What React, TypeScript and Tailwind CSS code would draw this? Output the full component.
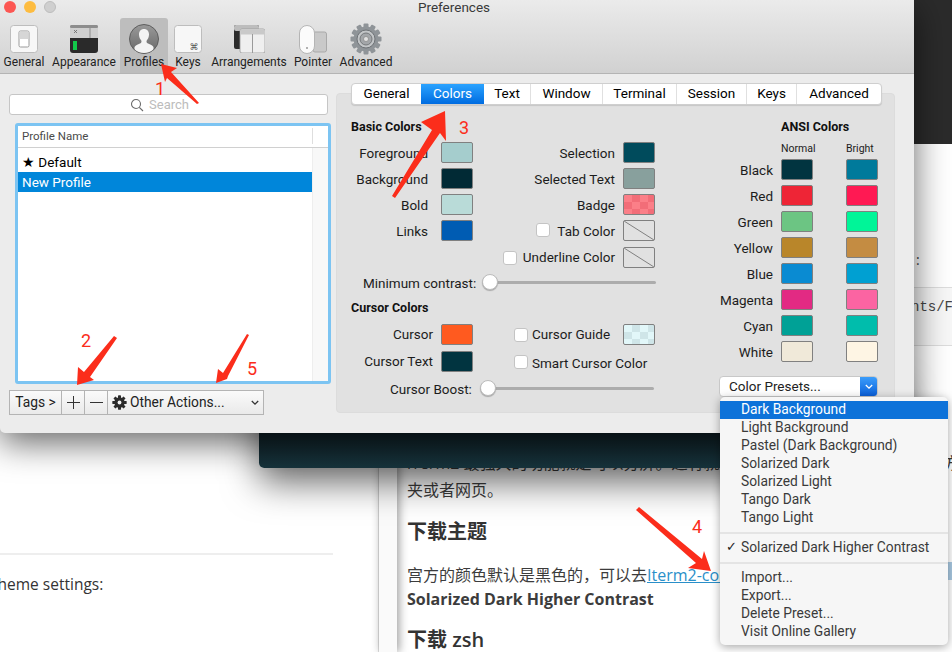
import React from "react";

const UI = { fontFamily: "Roboto, 'Liberation Sans', sans-serif" };
const PAGE = { fontFamily: "'Open Sans', 'Noto Sans CJK SC', sans-serif" };

function Swatch({ color, kind }: { color?: string; kind?: "none" | "check" | "checkLight" }) {
  const bg =
    kind === "check"
      ? "bg-[conic-gradient(#f26d78_25%,#fb7f88_0_50%,#f26d78_0_75%,#fb7f88_0)] bg-[length:16px_14px]"
      : kind === "checkLight"
      ? "bg-[conic-gradient(#cfe5e8_25%,#e2f7f9_0_50%,#cfe5e8_0_75%,#e2f7f9_0)] bg-[length:16px_14px]"
      : "";
  return (
    <div
      className={`relative w-8 h-[21px] shrink-0 rounded-[2px] border border-[#808080] overflow-hidden ${bg}`}
      style={color ? { backgroundColor: color } : undefined}
    >
      {kind === "none" && (
        <svg className="absolute inset-0 w-full h-full" viewBox="0 0 30 19" preserveAspectRatio="none">
          <line x1="0" y1="0" x2="30" y2="19" stroke="#808080" strokeWidth="1" />
        </svg>
      )}
    </div>
  );
}

function Check() {
  return <div className="w-[14px] h-[14px] shrink-0 rounded-[3px] bg-white border border-[#c4c4c4]" />;
}

function Label({ children }: { children: React.ReactNode }) {
  return <span className="pt-[2px] leading-[16px] whitespace-nowrap">{children}</span>;
}

function Slider() {
  return (
    <div className="relative h-4 w-[174px] flex items-center">
      <div className="w-full h-[3px] rounded-full bg-[#acacac]" />
      <div className="absolute left-0 top-0 w-4 h-4 rounded-full bg-white border border-[#bcbcbc] shadow-[0_1px_1px_rgba(0,0,0,.25)]" />
    </div>
  );
}

const tabs: [string, string][] = [
  ["General", "w-[69px]"],
  ["Colors", "w-[63px]"],
  ["Text", "w-[47px]"],
  ["Window", "w-[72px]"],
  ["Terminal", "w-[74px]"],
  ["Session", "w-[70px]"],
  ["Keys", "w-[50px]"],
  ["Advanced", "w-[84px]"],
];

const ansi: [string, string, string][] = [
  ["Black", "#013440", "#007a9b"],
  ["Red", "#ee2536", "#ff1953"],
  ["Green", "#6cc583", "#00f598"],
  ["Yellow", "#b9862a", "#c48c42"],
  ["Blue", "#0a8bd2", "#00a0d2"],
  ["Magenta", "#e22a83", "#fb64a2"],
  ["Cyan", "#00a196", "#00bdac"],
  ["White", "#f0e9d9", "#fef5e4"],
];

function ToolItem({ label, children, active, w }: { label: string; children: React.ReactNode; active?: boolean; w: string }) {
  return (
    <div className={`flex flex-col items-center h-[55px] rounded-t-[3px] ${w} ${active ? "bg-[#bdbdbd]" : ""}`}>
      <div className="h-[36px] flex items-center justify-center mt-[3px]">{children}</div>
      <span className="text-[12px] leading-[14px] text-[#222] whitespace-nowrap mt-[-2px]">{label}</span>
    </div>
  );
}

function Toolbar() {
  return (
    <div className="relative h-[74px] bg-gradient-to-b from-[#ebebeb] to-[#d1d1d1] border-b border-[#b4b4b4] shrink-0">
      <div className="flex items-center gap-[8px] pl-[4px] h-[14px]">
        <div className="w-3 h-3 rounded-full bg-[#fc5753]" />
        <div className="w-3 h-3 rounded-full bg-[#fdbc40]" />
        <div className="w-3 h-3 rounded-full bg-[#cfcfcf] border border-[#bdbdbd]" />
      </div>
      <div className="absolute top-0 left-0 right-0 pr-[6px] text-center text-[13.500px] leading-[14px] text-[#3a3a3a]">Preferences</div>
      <div className="flex pt-[4px]">
        <ToolItem label="General" w="w-[48px]">
          <svg width="28" height="28" viewBox="0 0 28 28">
            <rect x=".5" y=".5" width="27" height="27" rx="3" fill="#f7f7f7" stroke="#bdbdbd" />
            <rect x="9" y="6" width="10" height="16" rx="1.5" fill="#fff" stroke="#9a9a9a" />
            <rect x="9.5" y="6.5" width="9" height="7.5" fill="#d6d6d6" />
          </svg>
        </ToolItem>
        <ToolItem label="Appearance" w="w-[72px]">
          <svg width="28" height="28" viewBox="0 0 28 28">
            <rect width="28" height="28" rx="3" fill="#2a2a2a" />
            <path d="M0 3a3 3 0 0 1 3-3h22a3 3 0 0 1 3 3v10H0z" fill="#cfcfcf" />
            <rect x="0" y="0" width="28" height="3" rx="1.5" fill="#8d8d8d" />
            <line x1="20" y1="3" x2="20" y2="13" stroke="#8d8d8d" />
            <path d="M4 5l3 3M7 5l-3 3" stroke="#666" strokeWidth=".8" />
            <rect x="3" y="16" width="4" height="9" fill="#12c94a" />
          </svg>
        </ToolItem>
        <ToolItem label="Profiles" w="w-[48px]" active>
          <svg width="30" height="30" viewBox="0 0 30 30">
            <defs>
              <linearGradient id="pg" x1="0" y1="0" x2="0" y2="1">
                <stop offset="0" stopColor="#9a9a9a" />
                <stop offset="1" stopColor="#676767" />
              </linearGradient>
              <clipPath id="pc"><circle cx="15" cy="15" r="14" /></clipPath>
            </defs>
            <circle cx="15" cy="15" r="14.5" fill="url(#pg)" stroke="#5e5e5e" />
            <path clipPath="url(#pc)" d="M15 5c-3 0-5 2.200-5 5.500 0 2.500 1 4.500 2.300 6 .4 1.200.2 2-.8 2.700-2 1.100-5 1.800-6 3.800v6h19v-6c-1-2-4-2.700-6-3.800-1-.7-1.200-1.500-.8-2.700 1.300-1.500 2.300-3.500 2.300-6C20 7.200 18 5 15 5z" fill="#f4f4f4" />
          </svg>
        </ToolItem>
        <ToolItem label="Keys" w="w-[40px]">
          <svg width="28" height="28" viewBox="0 0 28 28">
            <rect x=".5" y=".5" width="27" height="27" rx="3" fill="#f7f7f7" stroke="#bdbdbd" />
            <text x="15.500" y="25" fontSize="9" fill="#555" fontFamily="'DejaVu Sans', sans-serif">⌘</text>
          </svg>
        </ToolItem>
        <ToolItem label="Arrangements" w="w-[82px]">
          <svg width="31" height="28" viewBox="0 0 31 28">
            <rect x="0" y="0" width="25" height="24" rx="2" fill="#2c2c2c" />
            <rect x="0" y="0" width="25" height="6" rx="2" fill="#bdbdbd" />
            <rect x="6" y="4" width="25" height="24" rx="2" fill="#efefef" stroke="#9a9a9a" strokeWidth=".8" />
            <rect x="6.500" y="4.500" width="24" height="5" fill="#c9c9c9" />
            <line x1="18.500" y1="9" x2="18.500" y2="28" stroke="#9a9a9a" />
          </svg>
        </ToolItem>
        <ToolItem label="Pointer" w="w-[46px]">
          <svg width="28" height="29" viewBox="0 0 28 29">
            <rect x="14" y="7" width="13.500" height="20" rx="2" fill="#c9c9c9" stroke="#a9a9a9" />
            <rect x=".5" y=".5" width="15" height="28" rx="7.500" fill="#fbfbfb" stroke="#b5b5b5" />
            <circle cx="8" cy="23" r="1" fill="#999" />
          </svg>
        </ToolItem>
        <ToolItem label="Advanced" w="w-[60px]">
          <svg width="32" height="32" viewBox="0 0 32 32">
            <g fill="#8f9498">
              <circle cx="16" cy="16" r="12.500" />
              {[0, 30, 60, 90, 120, 150, 180, 210, 240, 270, 300, 330].map((a) => (
                <rect key={a} x="13.500" y=".5" width="5" height="6" rx="1" transform={`rotate(${a} 16 16)`} />
              ))}
            </g>
            <circle cx="16" cy="16" r="9" fill="#c2c5c7" stroke="#6f7377" />
            <circle cx="16" cy="16" r="6" fill="#a3a6a9" stroke="#76797c" />
            <circle cx="16" cy="16" r="2.500" fill="#e1e1e1" stroke="#7a7a7a" strokeWidth=".6" />
          </svg>
        </ToolItem>
      </div>
    </div>
  );
}

function LeftPane() {
  return (
    <div className="w-[319px] ml-[9px] mr-[8px] pt-[20px] shrink-0 flex flex-col">
      <div className="h-[21px] bg-white border border-[#c6c6c6] rounded-[3px] flex items-center justify-center gap-[5px] pr-[18px]">
        <svg width="14" height="14" viewBox="0 0 14 14" fill="none" stroke="#6b6b6b" strokeWidth="1.100">
          <circle cx="6" cy="6" r="4.500" />
          <path d="M9.300 9.300L13 13" />
        </svg>
        <span className="text-[13px] text-[#bcbcbc]">Search</span>
      </div>
      <div className="mt-[8px] ml-[6px] mr-[-3px] h-[261px] border-[3px] border-[#7cc4f2] rounded-[3px] bg-white flex flex-col overflow-hidden">
        <div className="h-[22px] shrink-0 border-b border-[#d0d0d0] flex items-center text-[11.500px] text-[#4a4a4a] pl-[4px] relative">
          Profile Name
          <div className="absolute right-[15px] top-[2px] bottom-[3px] w-px bg-[#dedede]" />
        </div>
        <div className="flex flex-1">
          <div className="flex-1 pt-[4px] text-[13.500px]">
            <div className="h-[20px] leading-[20px] pl-[4px] text-black">★ Default</div>
            <div className="h-[20px] leading-[20px] pl-[4px] text-white bg-[#0086da]">New Profile</div>
          </div>
          <div className="w-[16px] bg-[#f8f8f8] border-l border-[#eeeeee]" />
        </div>
      </div>
      <div className="mt-[6px] flex h-[25px] w-[255px] border border-[#b4b4b4] text-[13.800px] text-[#222] bg-gradient-to-b from-[#fafafa] to-[#eaeaea]">
        <div className="w-[52px] flex items-center justify-center border-r border-[#b4b4b4]">Tags &gt;</div>
        <div className="w-[23px] flex items-center justify-center border-r border-[#b4b4b4]">
          <svg width="13" height="13" viewBox="0 0 13 13" stroke="#333" strokeWidth="1"><path d="M6.500 0v13M0 6.500h13" /></svg>
        </div>
        <div className="w-[23px] flex items-center justify-center border-r border-[#b4b4b4]">
          <svg width="13" height="13" viewBox="0 0 13 13" stroke="#333" strokeWidth="1"><path d="M0 6.500h13" /></svg>
        </div>
        <div className="flex-1 flex items-center pl-[4px] pr-[3px]">
          <svg width="15" height="15" viewBox="0 0 14 14" className="mr-[3px]">
            <g fill="#2b2b2b">
              <circle cx="7" cy="7" r="4.800" />
              {[0, 45, 90, 135, 180, 225, 270, 315].map((a) => (
                <rect key={a} x="5.600" y=".3" width="2.800" height="3.200" rx=".4" transform={`rotate(${a} 7 7)`} />
              ))}
            </g>
            <circle cx="7" cy="7" r="1.800" fill="#f3f3f3" />
          </svg>
          <span>Other Actions...</span>
          <svg width="8" height="6" viewBox="0 0 8 6" fill="none" stroke="#333" strokeWidth="1.300" className="ml-auto mr-[1px]"><path d="M.8 1l3.200 3.200L7.200 1" /></svg>
        </div>
      </div>
    </div>
  );
}

function BasicColumn() {
  const rows: [string, string][] = [
    ["Foreground", "#a5cdcd"],
    ["Background", "#012a35"],
    ["Bold", "#b9dbd8"],
    ["Links", "#005cb3"],
  ];
  return (
    <div className="w-[122px] shrink-0">
      {rows.map(([l, c]) => (
        <div key={l} className="flex items-center justify-end gap-[13px] h-[26px]">
          <Label>{l}</Label>
          <Swatch color={c} />
        </div>
      ))}
    </div>
  );
}

function SelectionColumn() {
  return (
    <div className="w-[182px] shrink-0">
      <div className="flex items-center justify-end gap-[8px] h-[26px]"><Label>Selection</Label><Swatch color="#004b5c" /></div>
      <div className="flex items-center justify-end gap-[8px] h-[26px]"><Label>Selected Text</Label><Swatch color="#88a09d" /></div>
      <div className="flex items-center justify-end gap-[8px] h-[26px]"><Label>Badge</Label><Swatch kind="check" /></div>
      <div className="flex items-center justify-end gap-[8px] h-[26px]">
        <div className="flex items-center gap-[7px]"><Check /><Label>Tab Color</Label></div>
        <Swatch kind="none" />
      </div>
      <div className="flex items-center justify-end gap-[8px] h-[29px]">
        <div className="flex items-center gap-[6px]"><Check /><span className="whitespace-nowrap">Underline Color</span></div>
        <Swatch kind="none" />
      </div>
    </div>
  );
}

function RightPane() {
  return (
    <div className="relative mt-[19px] w-[559px] h-[320px] bg-[#e1e1e1] rounded-[4px] border border-[#dcdcdc] text-[13.500px] text-[#1c1c1c]">
      <div className="absolute left-[14px] top-[-11px] h-[22px] w-[531px] flex bg-white rounded-[4px] border border-[#cfcfcf] shadow-[0_1px_1px_rgba(0,0,0,.12)] overflow-hidden text-[13.500px] text-black">
        {tabs.map(([t, w], i) => (
          <div
            key={t}
            className={`${w} shrink-0 flex items-center justify-center pb-[2px] ${
              i === 1 ? "text-white bg-gradient-to-b from-[#2aa3ff] to-[#006be0]" : i > 1 && i < 7 ? "border-r border-[#e0e0e0]" : ""
            }`}
          >
            {t}
          </div>
        ))}
      </div>

      <div className="flex pt-[25px] pl-[14px]">
        <div className="w-[366px] shrink-0">
          <div className="font-bold text-[12.500px] leading-[16px] text-[#111] h-[18px]">Basic Colors</div>
          <div className="flex justify-between mt-[2px] w-[304px]">
            <BasicColumn />
            <SelectionColumn />
          </div>
          <div className="flex items-center ml-[12px] h-[20px]">
            <Label>Minimum contrast:</Label>
            <span className="ml-[6px]"><Slider /></span>
          </div>
          <div className="font-bold text-[12.500px] h-[18px] leading-[16px] text-[#111] mt-[8px]">Cursor Colors</div>
          <div className="flex mt-[3px] w-[304px]">
            <div className="w-[122px] shrink-0">
              <div className="flex items-center justify-end gap-[8px] h-[27px]"><span>Cursor</span><Swatch color="#ff5a1f" /></div>
              <div className="flex items-center justify-end gap-[8px] h-[27px]"><span>Cursor Text</span><Swatch color="#013440" /></div>
            </div>
            <div className="ml-[41px] shrink-0">
              <div className="flex items-center h-[27px] w-[141px] gap-[4px]"><Check /><span className="whitespace-nowrap">Cursor Guide</span><span className="ml-auto"><Swatch kind="checkLight" /></span></div>
              <div className="flex items-center h-[27px] w-[141px] gap-[4px]"><Check /><Label>Smart Cursor Color</Label></div>
            </div>
          </div>
          <div className="flex items-center h-[22px] mt-[2px] ml-[39px]">
            <Label>Cursor Boost:</Label>
            <span className="ml-[8px]"><Slider /></span>
          </div>
        </div>
        <div className="w-[163px] shrink-0">
          <div className="font-bold text-[12.500px] leading-[16px] h-[18px] text-[#111] ml-[64px]">ANSI Colors</div>
          <div className="flex text-[10.500px] leading-[14px] h-[14px] mt-[5px] ml-[64px]">
            <span className="w-[65px]">Normal</span>
            <span>Bright</span>
          </div>
          <div>
            {ansi.map(([n, a, b]) => (
              <div key={n} className="flex items-center h-[26px]">
                <span className="w-[56px] pt-[2px] leading-[16px] flex justify-end shrink-0 whitespace-nowrap">{n}</span>
                <span className="w-[8px]" />
                <Swatch color={a} />
                <span className="w-[33px]" />
                <Swatch color={b} />
              </div>
            ))}
          </div>
        </div>
      </div>
    </div>
  );
}

const presets = ["Light Background", "Pastel (Dark Background)", "Solarized Dark", "Solarized Light", "Tango Dark", "Tango Light"];
const actions = ["Import...", "Export...", "Delete Preset...", "Visit Online Gallery"];

function Menu() {
  return (
    <div className="absolute z-30 left-[720px] top-[397px] w-[228px] h-[248px] bg-[#f6f6f6] rounded-[5px] shadow-[0_2px_10px_rgba(0,0,0,.35)] py-[4px] text-[13.800px] text-[#3a3a3a]">
      <div className="h-[18px] leading-[16px] pl-[21px] bg-[#0d72d9] text-white">Dark Background</div>
      {presets.map((p) => (
        <div key={p} className="h-[18px] leading-[16px] pl-[21px]">{p}</div>
      ))}
      <div className="h-[2px] bg-[#e4e4e4] my-[5px]" />
      <div className="h-[18px] leading-[16px] pl-[21px] relative">
        <span className="absolute left-[6px] text-[13px] text-[#222]" style={{ fontFamily: "'DejaVu Sans', sans-serif" }}>✓</span>
        Solarized Dark Higher Contrast
      </div>
      <div className="h-[2px] bg-[#e4e4e4] my-[5px]" />
      {actions.map((p) => (
        <div key={p} className="h-[18px] leading-[16px] pl-[21px]">{p}</div>
      ))}
    </div>
  );
}

function Annotations() {
  return (
    <>
      <svg className="absolute inset-0 z-40 pointer-events-none" width="952" height="652" viewBox="0 0 952 652">
        <g fill="#fb2d1b">
          <polygon points="161,64 177,68 171,72 199,103 197,104 167,78 165,82" />
          <polygon points="445,111 446,141 440,133 395,198 392,196 432,130 421,122" />
          <polygon points="77,385 78,367 84,372 114,336 117,338 90,377 94,380" />
          <polygon points="216,383 218,369 223,373 247,334 249,335 228,376 227,379" />
          <polygon points="711,571 704,551 702,559 639,507 636,510 696,563 688,568" />
        </g>
      </svg>
      <span className="absolute z-40 left-[155px] top-[79px] text-[18px] leading-[20px] text-[#fb2d1b]">1</span>
      <span className="absolute z-40 left-[81px] top-[331px] text-[18px] leading-[20px] text-[#fb2d1b]">2</span>
      <span className="absolute z-40 left-[459px] top-[118px] text-[18px] leading-[20px] text-[#fb2d1b]">3</span>
      <span className="absolute z-40 left-[692px] top-[517px] text-[18px] leading-[20px] text-[#fb2d1b]">4</span>
      <span className="absolute z-40 left-[247px] top-[359px] text-[18px] leading-[20px] text-[#fb2d1b]">5</span>
    </>
  );
}

export default function App() {
  return (
    <div className="relative w-[952px] h-[652px] overflow-hidden bg-white" style={UI}>
      {/* page behind */}
      <div className="absolute inset-0 flex" style={PAGE}>
        <div className="w-[379px] shrink-0 border-r border-[#e0e0e0] bg-white relative">
          <div className="absolute left-0 w-[333px] top-[553px] h-[2px] bg-[#eeeeee]" />
          <div className="absolute left-0 top-[573px] text-[15.500px] leading-[22px] text-[#333] whitespace-nowrap w-full overflow-hidden">
            <span className="ml-[-11px] inline-block">Theme settings:</span>
          </div>
        </div>
        <div className="relative z-[1] w-[18px] shrink-0 bg-[#fafafa] shadow-[2px_0_10px_rgba(0,0,0,.4)]" />
        <div className="flex-1 bg-white relative overflow-hidden">
          <div className="absolute left-[10px] top-[451px] w-[700px] text-[16px] leading-[24px] text-[#3c3c3c] whitespace-nowrap">iTerm2 最强大的功能就是可以分屏。还有就是可以打开文件夹或者网页，很方便使用。</div>
          <div className="absolute left-[10px] top-[478px] text-[16px] leading-[24px] text-[#3c3c3c]">夹或者网页。</div>
          <div className="absolute left-[10px] top-[518px] text-[20px] leading-[28px] font-semibold text-[#333]">下载主题</div>
          <div className="absolute left-[10px] top-[563px] w-[500px] text-[16px] leading-[24px] text-[#3c3c3c] whitespace-nowrap">
            宫方的颜色默认是黑色的，可以去<span className="text-[#2a8fc9] underline">Iterm2-color-schemes</span>
          </div>
          <div className="absolute left-[10px] top-[587px] text-[16px] leading-[24px] font-bold text-[#3c3c3c]">Solarized Dark Higher Contrast</div>
          <div className="absolute left-[10px] top-[628px] text-[20px] leading-[24px] font-semibold text-[#333]">下载 zsh</div>
          <div className="absolute left-[551px] top-[562px] w-[4px] h-[18px] bg-[#a9c9e2]" />
        </div>
      </div>

      {/* right edge: dark header and code block */}
      <div className="absolute z-[5] left-[914px] top-0 w-[38px] h-[144px] bg-[#2b2b2b]" />
      <div className="absolute left-[914px] top-[287px] w-[38px] h-[59px] bg-[#f7f7f7] border-y border-[#dddddd] overflow-hidden">
        <span className="absolute left-[-3px] top-[10px] text-[14px] leading-[18px] text-[#444] whitespace-nowrap" style={{ fontFamily: "'Liberation Mono', monospace" }}>nts/F</span>
      </div>
      <div className="absolute left-[916px] top-[250px] text-[14px] leading-[20px] text-[#444]" style={PAGE}>:</div>

      {/* dark terminal window */}
      <div className="absolute z-10 left-[259px] top-[380px] w-[640px] h-[88px] rounded-b-[5px] bg-gradient-to-b from-[#0f2026] from-60% to-[#17343d] shadow-[0_14px_36px_rgba(0,0,0,.6)]" />

      {/* preferences window */}
      <div className="absolute z-20 left-0 top-0 w-[914px] h-[433px] bg-[#ececec] shadow-[0_10px_34px_rgba(0,0,0,.6)] flex flex-col rounded-b-[5px]">
        <Toolbar />
        <div className="flex flex-1 min-h-0">
          <LeftPane />
          <RightPane />
        </div>
      </div>

      {/* presets button */}
      <div className="absolute z-30 left-[719px] top-[376px] w-[159px] h-[21px] rounded-[4px] bg-white border border-[#c8c8c8] flex items-center text-[13.500px] text-[#222] overflow-hidden">
        <span className="pl-[9px] flex-1 whitespace-nowrap">Color Presets...</span>
        <div className="w-[17px] h-full shrink-0 bg-gradient-to-b from-[#3b9dfb] to-[#0a5fd9] flex items-center justify-center">
          <svg width="8" height="6" viewBox="0 0 8 6" fill="none" stroke="#fff" strokeWidth="1.300"><path d="M.8 1l3.200 3.200L7.200 1" /></svg>
        </div>
      </div>

      <Menu />
      <Annotations />
    </div>
  );
}
